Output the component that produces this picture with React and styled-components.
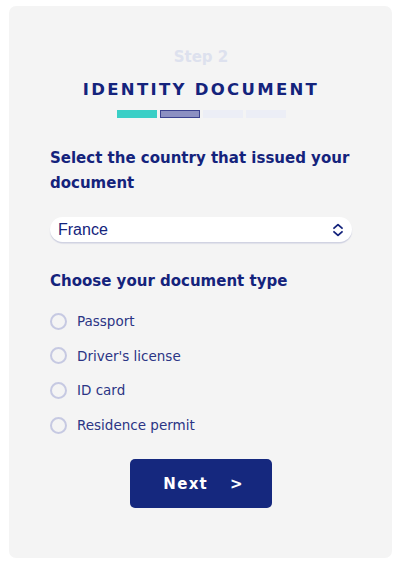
import React, { useState } from "react";
import styled, { createGlobalStyle } from "styled-components";

const Global = createGlobalStyle`
  html, body { margin: 0; padding: 0; background: #ffffff; }
  body { font-family: "DejaVu Sans", "Open Sans", sans-serif; }
  * { box-sizing: border-box; }
`;

const Page = styled.div`
  padding: 6px 8px 10px 9px;
`;

const Card = styled.div`
  background: #f4f4f4;
  border-radius: 7px;
  height: 552px;
  padding: 41px 40px 0 41px;
  display: flex;
  flex-direction: column;
`;

const Step = styled.div`
  text-align: center;
  font-weight: 700;
  font-size: 15px;
  color: #dde1ee;
  line-height: 20px;
`;

const Title = styled.h1`
  margin: 12px 0 0;
  text-align: center;
  font-weight: 700;
  font-size: 16.5px;
  letter-spacing: 2.3px;
  color: #14237c;
  line-height: 22px;
`;

const Progress = styled.div`
  display: flex;
  justify-content: center;
  gap: 3px;
  margin-top: 9px;
`;

const Seg = styled.div`
  width: 40px;
  height: 8px;
  background: ${(p) => p.$bg};
  border: 1px solid ${(p) => p.$border};
`;

const Heading = styled.h2`
  margin: ${(p) => p.$mt}px 0 0;
  font-weight: 700;
  font-size: 15px;
  line-height: 25px;
  color: #14237c;
`;

const SelectBox = styled.div`
  margin-top: 21px;
  height: 25px;
  background: #ffffff;
  border-radius: 13px;
  box-shadow: 0 1.5px 1px rgba(40, 50, 140, 0.18);
  display: flex;
  align-items: center;
  justify-content: space-between;
  padding: 0 8px 0 8px;
  font-family: "Liberation Sans", Arial, sans-serif;
  font-size: 16px;
  color: #14237c;
`;

const Options = styled.div`
  margin-top: 17px;
  display: flex;
  flex-direction: column;
  gap: 14.7px;
`;

const Option = styled.label`
  display: flex;
  align-items: center;
  gap: 10px;
  font-size: 13.5px;
  color: #2b3585;
  line-height: 20px;
  cursor: pointer;
`;

const Radio = styled.span`
  width: 17px;
  height: 17px;
  border-radius: 50%;
  border: 2px solid #c6c9e2;
  background: ${(p) => (p.$on ? "#c6c9e2" : "transparent")};
  flex: none;
`;

const ButtonRow = styled.div`
  display: flex;
  justify-content: center;
  margin-top: 24px;
`;

const Button = styled.button`
  width: 142px;
  height: 49px;
  border: none;
  border-radius: 5px;
  background: #15287e;
  color: #ffffff;
  font-family: "DejaVu Sans", sans-serif;
  font-weight: 700;
  font-size: 15px;
  letter-spacing: 1.3px;
  display: flex;
  align-items: center;
  justify-content: center;
  gap: 22px;
  padding: 0 0 0 4px;
`;

const Arrow = styled.span`
  font-size: 15px;
  letter-spacing: 0;
`;

const Chevrons = () => (
  <svg width="12" height="14" viewBox="0 0 12 14" fill="none">
    <path d="M2 5.2 L6 1.6 L10 5.2" stroke="#14237c" strokeWidth="1.8" strokeLinecap="round" strokeLinejoin="round" />
    <path d="M2 8.8 L6 12.4 L10 8.8" stroke="#14237c" strokeWidth="1.8" strokeLinecap="round" strokeLinejoin="round" />
  </svg>
);

const docs = ["Passport", "Driver's license", "ID card", "Residence permit"];

export default function App() {
  const [sel, setSel] = useState(null);
  return (
    <Page>
      <Global />
      <Card>
        <Step>Step 2</Step>
        <Title>IDENTITY DOCUMENT</Title>
        <Progress>
          <Seg $bg="#3acfc6" $border="#3acfc6" />
          <Seg $bg="#8c90c2" $border="#3c4390" />
          <Seg $bg="#eceef6" $border="#eceef6" />
          <Seg $bg="#eceef6" $border="#eceef6" />
        </Progress>
        <Heading $mt={28}>Select the country that issued your document</Heading>
        <SelectBox>
          <span>France</span>
          <Chevrons />
        </SelectBox>
        <Heading $mt={27}>Choose your document type</Heading>
        <Options>
          {docs.map((d) => (
            <Option key={d} onClick={() => setSel(d)}>
              <Radio $on={sel === d} />
              {d}
            </Option>
          ))}
        </Options>
        <ButtonRow>
          <Button>
            <span>Next</span>
            <Arrow>&gt;</Arrow>
          </Button>
        </ButtonRow>
      </Card>
    </Page>
  );
}
